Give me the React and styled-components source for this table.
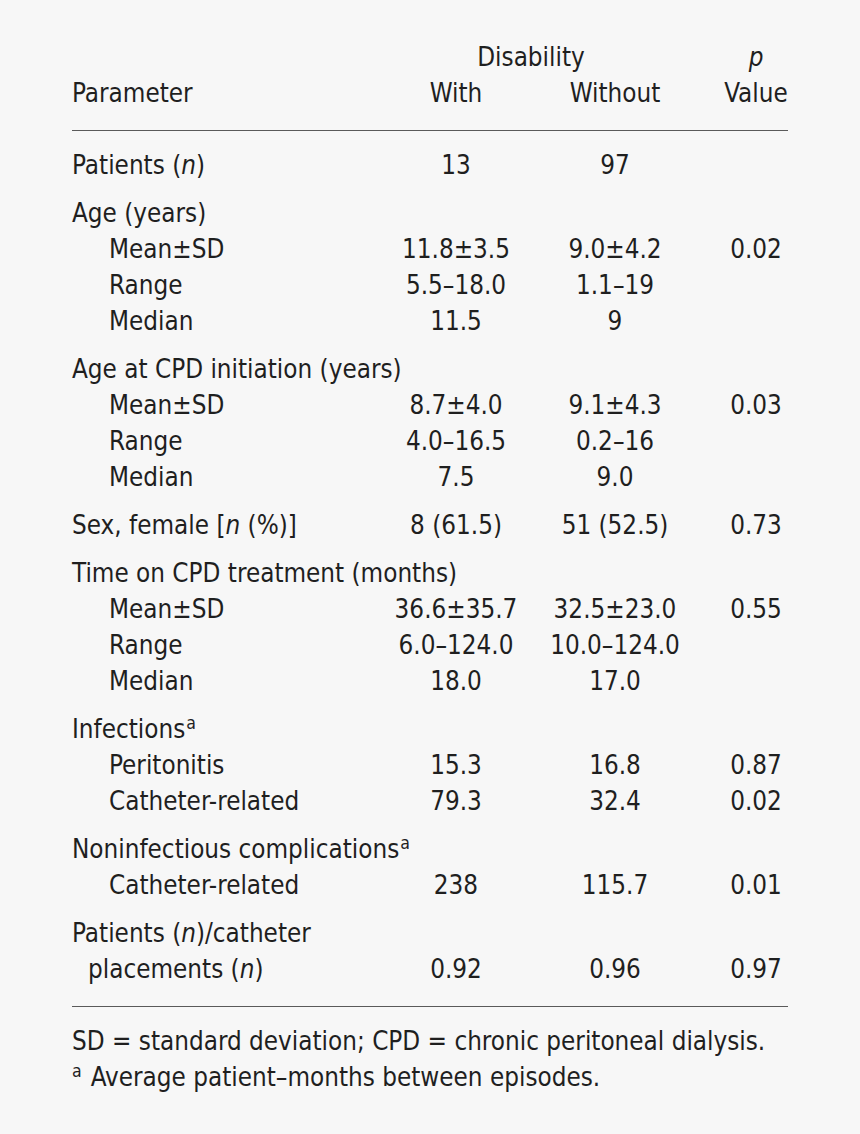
import styled, { createGlobalStyle } from "styled-components";

const GlobalStyle = createGlobalStyle`
  html, body {
    margin: 0;
    padding: 0;
    background: #f7f7f7;
  }
  body {
    font-family: "DejaVu Sans Condensed", "DejaVu Sans", sans-serif;
    font-stretch: condensed;
    color: #1f1f1f;
  }
`;

const Page = styled.div`
  width: 860px;
  min-height: 1134px;
  box-sizing: border-box;
  padding: 39px 72px 0 72px;
  font-size: 25.8px;
`;

const Head = styled.div`
  padding-bottom: 19px;
  border-bottom: 1px solid #5a5a5a;
`;

const Body = styled.div`
  padding: 16px 0 19px;
  border-bottom: 1px solid #5a5a5a;
`;

const Group = styled.div`
  & + & {
    margin-top: 12px;
  }
`;

const Row = styled.div`
  display: grid;
  grid-template-columns: 300px 168px 150px 98px;
  height: 36px;
  align-items: center;
  white-space: nowrap;
`;

const Label = styled.div`
  padding-left: ${(p) => p.$indent || 0}px;
`;

const Cell = styled.div`
  text-align: center;
`;

const Span = styled.div`
  grid-column: 2 / span 2;
  text-align: center;
`;

const PCell = styled.div`
  padding-left: 34px;
  text-align: center;
`;

const Sup = styled.sup`
  font-size: 0.68em;
  vertical-align: 0.5em;
  line-height: 0;
  margin-left: 1px;
`;

const Foot = styled.div`
  padding-top: 16px;
`;

const FootLine = styled.div`
  height: 36px;
  line-height: 36px;
  white-space: nowrap;
`;

const FootMark = styled(Sup)`
  margin-left: 0;
  margin-right: 9px;
`;

const N = () => <i>n</i>;

const groups = [
  [{ label: <>Patients (<N />)</>, with: "13", without: "97" }],
  [
    { label: "Age (years)" },
    { label: "Mean±SD", indent: 37, with: "11.8±3.5", without: "9.0±4.2", p: "0.02" },
    { label: "Range", indent: 37, with: "5.5–18.0", without: "1.1–19" },
    { label: "Median", indent: 37, with: "11.5", without: "9" },
  ],
  [
    { label: "Age at CPD initiation (years)" },
    { label: "Mean±SD", indent: 37, with: "8.7±4.0", without: "9.1±4.3", p: "0.03" },
    { label: "Range", indent: 37, with: "4.0–16.5", without: "0.2–16" },
    { label: "Median", indent: 37, with: "7.5", without: "9.0" },
  ],
  [{ label: <>Sex, female [<N /> (%)]</>, with: "8 (61.5)", without: "51 (52.5)", p: "0.73" }],
  [
    { label: "Time on CPD treatment (months)" },
    { label: "Mean±SD", indent: 37, with: "36.6±35.7", without: "32.5±23.0", p: "0.55" },
    { label: "Range", indent: 37, with: "6.0–124.0", without: "10.0–124.0" },
    { label: "Median", indent: 37, with: "18.0", without: "17.0" },
  ],
  [
    { label: <>Infections<Sup>a</Sup></> },
    { label: "Peritonitis", indent: 37, with: "15.3", without: "16.8", p: "0.87" },
    { label: "Catheter-related", indent: 37, with: "79.3", without: "32.4", p: "0.02" },
  ],
  [
    { label: <>Noninfectious complications<Sup>a</Sup></> },
    { label: "Catheter-related", indent: 37, with: "238", without: "115.7", p: "0.01" },
  ],
  [
    { label: <>Patients (<N />)/catheter</> },
    { label: <>placements (<N />)</>, indent: 16, with: "0.92", without: "0.96", p: "0.97" },
  ],
];

export default function App() {
  return (
    <>
      <GlobalStyle />
      <Page>
        <Head>
          <Row>
            <Label />
            <Span>Disability</Span>
            <PCell>
              <i>p</i>
            </PCell>
          </Row>
          <Row>
            <Label>Parameter</Label>
            <Cell>With</Cell>
            <Cell>Without</Cell>
            <PCell>Value</PCell>
          </Row>
        </Head>
        <Body>
          {groups.map((rows, gi) => (
            <Group key={gi}>
              {rows.map((r, ri) => (
                <Row key={ri}>
                  <Label $indent={r.indent}>{r.label}</Label>
                  <Cell>{r.with}</Cell>
                  <Cell>{r.without}</Cell>
                  <PCell>{r.p}</PCell>
                </Row>
              ))}
            </Group>
          ))}
        </Body>
        <Foot>
          <FootLine>SD = standard deviation; CPD = chronic peritoneal dialysis.</FootLine>
          <FootLine>
            <FootMark>a</FootMark>Average patient–months between episodes.
          </FootLine>
        </Foot>
      </Page>
    </>
  );
}
